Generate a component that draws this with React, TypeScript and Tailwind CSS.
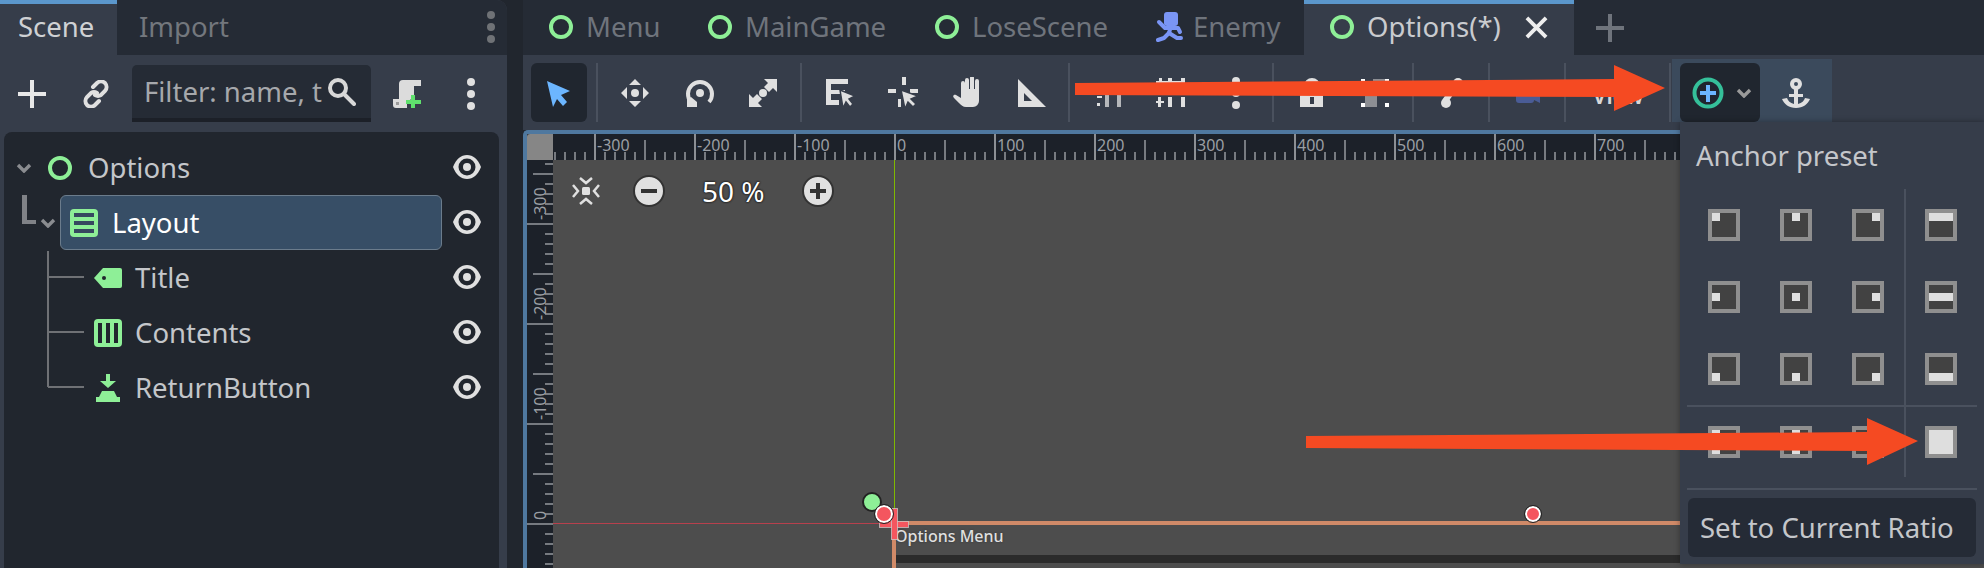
import React from 'react';

const FONT = { fontFamily: '"Noto Sans", sans-serif' };

const Ring = () => (
  <svg width="24" height="24" viewBox="0 0 24 24" className="shrink-0">
    <circle cx="12" cy="12" r="10" fill="none" stroke="#8eef97" strokeWidth="4" />
  </svg>
);

const Eye = () => (
  <svg width="28" height="24" viewBox="0 0 28 24" className="shrink-0">
    <path d="M0 12C3 4 8 0 14 0s11 4 14 12c-3 8-8 12-14 12S3 20 0 12z" fill="#e0e0e0" />
    <circle cx="14" cy="12" r="8.5" fill="#21262e" />
    <circle cx="14" cy="12" r="4" fill="#e0e0e0" />
  </svg>
);

const Chevron = ({ color = '#8a8c90' }: { color?: string }) => (
  <svg width="16" height="10" viewBox="0 0 16 10" className="shrink-0">
    <path d="M2 2l6 6 6-6" fill="none" stroke={color} strokeWidth="3.4" />
  </svg>
);

const LayoutIcon = () => (
  <svg width="28" height="28" viewBox="0 0 28 28" className="shrink-0">
    <rect width="28" height="28" rx="4" fill="#8eef97" />
    <rect x="4" y="4" width="20" height="4" fill="#36485f" />
    <rect x="4" y="12" width="20" height="4" fill="#36485f" />
    <rect x="4" y="20" width="20" height="4" fill="#36485f" />
  </svg>
);

const TagIcon = () => (
  <svg width="28" height="28" viewBox="0 0 28 28" className="shrink-0">
    <path d="M9 4h17a2 2 0 012 2v16a2 2 0 01-2 2H9l-9-10z" fill="#8eef97" />
    <circle cx="10" cy="14" r="2" fill="#21262e" />
  </svg>
);

const ColumnsIcon = () => (
  <svg width="28" height="28" viewBox="0 0 28 28" className="shrink-0">
    <rect width="28" height="28" rx="4" fill="#8eef97" />
    <rect x="4" y="4" width="4" height="20" fill="#21262e" />
    <rect x="12" y="4" width="4" height="20" fill="#21262e" />
    <rect x="20" y="4" width="4" height="20" fill="#21262e" />
  </svg>
);

const ReturnIcon = () => (
  <svg width="28" height="28" viewBox="0 0 28 28" className="shrink-0">
    <path d="M12 0h4v7h6l-8 7-8-7h6z" fill="#8eef97" />
    <path d="M8 17h12l3 6H5z" fill="#8eef97" />
    <rect x="2" y="23" width="24" height="5" fill="#8eef97" />
  </svg>
);

const TreeRow = ({ indent, icon, label, chevron, chevronGap = 4, gap = 13, selected }: {
  indent: number; icon: React.ReactNode; label: string; chevron?: boolean; chevronGap?: number; gap?: number; selected?: boolean;
}) => (
  <div className="h-[55px] flex items-center relative">
    <div className="flex items-center h-full" style={{ marginLeft: indent }}>
      {chevron && <div className="w-[16px]" style={{ marginRight: chevronGap }}><Chevron /></div>}
      {selected ? (
        <div className="w-[382px] h-[55px] flex items-center pl-[9px] gap-[14px] bg-[#374e66] border border-[#6b7c8c] rounded-[6px] text-white">
          {icon}<span>{label}</span>
        </div>
      ) : (
        <div className="flex items-center text-[#c4c6ca]" style={{ gap }}>{icon}<span>{label}</span></div>
      )}
    </div>
    <div className="absolute left-[449px] top-[15px]"><Eye /></div>
  </div>
);

const SceneDock = () => (
  <div className="w-[507px] shrink-0 flex flex-col bg-[#363d4a] rounded-tr-[10px] overflow-hidden">
    <div className="h-[55px] flex bg-[#252b35] relative">
      <div className="w-[117px] border-t-4 border-[#5b97cc] bg-[#363d4a] text-[#cfd1d4] pl-[18px] pb-[5px] flex items-center">Scene</div>
      <div className="pl-[22px] pb-[1px] flex items-center text-[#73777d]">Import</div>
      <svg width="8" height="32" viewBox="0 0 8 32" className="absolute right-[12px] top-[11px]">
        <circle cx="4" cy="4" r="4" fill="#6f7276" /><circle cx="4" cy="16" r="4" fill="#6f7276" /><circle cx="4" cy="28" r="4" fill="#6f7276" />
      </svg>
    </div>
    <div className="h-[77px] flex items-center shrink-0">
      <svg width="28" height="28" viewBox="0 0 28 28" className="ml-[18px]">
        <path d="M12 0h4v12h12v4H16v12h-4V16H0v-4h12z" fill="#e8e8e8" />
      </svg>
      <svg width="28" height="28" viewBox="0 0 28 28" className="ml-[36px]">
        <g fill="none" stroke="#e0e0e0" strokeWidth="4" strokeLinecap="round">
          <path d="M11 7l4-4a6 6 0 018 0 6 6 0 010 8l-4 4a6 6 0 01-6 0" />
          <path d="M17 21l-4 4a6 6 0 01-8 0 6 6 0 010-8l4-4a6 6 0 016 0" />
        </g>
      </svg>
      <div className="ml-[22px] w-[239px] h-[57px] bg-[#252b35] border-b-4 border-[#1c2028] rounded-t-[5px] flex items-center pl-[12px] relative text-[#a6a8ac] overflow-hidden">
        <span className="whitespace-nowrap">Filter: name, t</span>
        <svg width="28" height="28" viewBox="0 0 28 28" className="absolute left-[196px] top-[13px]">
          <circle cx="10" cy="10" r="8" fill="#252b35" stroke="#d8d8d8" strokeWidth="4" />
          <path d="M16 16l10 10" stroke="#d8d8d8" strokeWidth="4" strokeLinecap="round" />
        </svg>
      </div>
      <svg width="28" height="28" viewBox="0 0 28 28" className="ml-[22px]">
        <path d="M10 0h18v6h-7v10l-3 3-4 5v4H3a3 3 0 01-3-3v-6h6V4a4 4 0 014-4z" fill="#dcdcdc" />
        <path d="M3 22h3v3H3z" fill="#9a9a9a" />
        <path d="M18 15h4v5h6v4h-6v4h-4v-4h-5v-4h5z" fill="#5fe06d" />
      </svg>
      <svg width="8" height="32" viewBox="0 0 8 32" className="ml-[46px]">
        <circle cx="4" cy="4" r="4" fill="#e0e0e0" /><circle cx="4" cy="16" r="4" fill="#e0e0e0" /><circle cx="4" cy="28" r="4" fill="#e0e0e0" />
      </svg>
    </div>
    <div className="flex-1 ml-[4px] mr-[8px] bg-[#21262e] rounded-t-[8px] pt-[8px] relative">
      {/* relationship lines */}
      <svg width="100" height="300" viewBox="0 0 100 300" className="absolute left-0 top-0">
        <path d="M18 63h5v25h9v4H18z" fill="#808287" />
        <path d="M44 119v136M44 145h36M44 200h36M44 255h36" fill="none" stroke="#6f7175" strokeWidth="2" />
      </svg>
      <TreeRow indent={12} icon={<Ring />} label="Options" chevron chevronGap={16} gap={16} />
      <TreeRow indent={36} icon={<LayoutIcon />} label="Layout" chevron selected />
      <TreeRow indent={90} icon={<TagIcon />} label="Title" />
      <TreeRow indent={90} icon={<ColumnsIcon />} label="Contents" />
      <TreeRow indent={90} icon={<ReturnIcon />} label="ReturnButton" />
    </div>
  </div>
);

const EnemyIcon = () => (
  <svg width="28" height="30" viewBox="0 0 28 30" className="shrink-0">
    <rect x="8" y="0" width="14" height="14" rx="3" fill="#7a95f5" />
    <g fill="none" stroke="#7a95f5" strokeWidth="4" strokeLinejoin="round" strokeLinecap="round">
      <path d="M3 10l6 6h13l2 4" />
      <path d="M15 14l-2 7" />
      <path d="M13 21l-5 5-6 2" />
      <path d="M13 21l8 5h4" />
    </g>
  </svg>
);

const DocTab = ({ label, icon, w, pl, gap = 13 }: { label: string; icon: React.ReactNode; w: number; pl: number; gap?: number }) => (
  <div className="flex items-center pb-[1px] text-[#6f747c]" style={{ width: w, paddingLeft: pl, gap }}>
    {icon}<span>{label}</span>
  </div>
);

const Sep = ({ ml = 4, mr = 6 }: { ml?: number; mr?: number }) => (
  <div className="w-[2px] h-[59px] bg-[#4a515e] shrink-0" style={{ marginLeft: ml, marginRight: mr }} />
);

const Tool = ({ children, w = 64 }: { children: React.ReactNode; w?: number }) => (
  <div className="h-[59px] flex items-center justify-center shrink-0" style={{ width: w }}>{children}</div>
);

const I = ({ children }: { children: React.ReactNode }) => (
  <svg width="32" height="32" viewBox="0 0 32 32">{children}</svg>
);

const W = '#e0e0e0';

const Toolbar = () => (
  <div className="h-[75px] flex items-start pt-[8px] bg-[#363d4a] shrink-0 pl-[8px]">
    <div className="w-[56px] h-[59px] rounded-[6px] bg-[#20262f] flex items-center justify-center shrink-0">
      <I><path d="M4 4l23 10-9 4 6 7-4 4-6-7-4 8z" fill="#6cb6ff" /></I>
    </div>
    <Sep ml={9} mr={5} />
    <Tool>
      <I>
        <circle cx="16" cy="16" r="4" fill={W} />
        <path d="M16 2l6 6H10zM16 30l-6-6h12zM2 16l6-6v12zM30 16l-6 6V10z" fill={W} />
      </I>
    </Tool>
    <Tool>
      <I>
        <circle cx="17" cy="16" r="4" fill={W} />
        <path d="M8 25a12 12 0 1118 0" fill="none" stroke={W} strokeWidth="4" />
        <path d="M4 30v-8l4-2 6 5v5z" fill={W} />
      </I>
    </Tool>
    <Tool>
      <I>
        <circle cx="16" cy="16" r="4" fill={W} />
        <g transform="translate(2 2)">
          <path d="M15 0H28V13L24 9 20 13 15 8 19 4zM13 28H0V15L4 19 8 15 13 20 9 24z" fill={W} />
        </g>
      </I>
    </Tool>
    <Sep ml={5} />
    <Tool>
      <I>
        <path d="M2 2h22v5H7v6h14v4H7v6h8v5H2z" fill={W} />
        <path d="M16 13l15 6-6 3 4 5-3 3-4-5-3 6z" fill={W} stroke="#363d4a" strokeWidth="1.5" />
      </I>
    </Tool>
    <Tool>
      <I>
        <path d="M14 0h4v8h-4zM0 12h8v4H0zM22 12h8v4h-8zM10 22h3v8h-3z" fill={W} />
        <path d="M13 13l17 6-7 3 5 5-3 3-5-5-3 7z" fill={W} stroke="#363d4a" strokeWidth="1.5" />
      </I>
    </Tool>
    <Tool>
      <I>
        <path d="M13 3a2 2 0 014 0v9h1V1a2 2 0 014 0v11h1V4a2 2 0 014 0v20a6 6 0 01-6 6h-7c-3 0-5-2-7-4l-5-5c-2-2 0-4 2-3l5 3V6a2 2 0 014 0z" fill={W} />
      </I>
    </Tool>
    <Tool>
      <I>
        <path fillRule="evenodd" d="M2 2l28 28H2zM8 16v8h8z" fill={W} />
      </I>
    </Tool>
    <Sep />
    {/* these sit mostly under the arrow, only their ends show */}
    <Tool>
      <I>
        <path d="M13 6h4v24h-4zM25 6h4v24h-4z" fill={W} opacity=".75" />
        <path d="M5 19h5v2H5zM5 26h3v3H5z" fill={W} />
      </I>
    </Tool>
    <Tool>
      <I>
        <path d="M-1 4h30v3H-1zM3 1h3v12H3zM12 1h4v12h-4zM25 1h4v12h-4zM2 20h3v10H2zM-1 24h9v2H-1zM12 20h4v10h-4zM25 20h4v10h-4z" fill={W} />
      </I>
    </Tool>
    <Tool>
      <I>
        <circle cx="16" cy="4" r="4" fill={W} /><circle cx="16" cy="16" r="4" fill={W} /><circle cx="16" cy="28" r="4" fill={W} />
      </I>
    </Tool>
    <Sep />
    <Tool>
      <I>
        <path d="M8 14V9a8 8 0 0116 0v5h3v16H4V14zM12 14h8V9a4 4 0 00-8 0z" fill={W} fillRule="evenodd" />
        <rect x="14" y="20" width="4" height="7" fill="#363d4a" />
      </I>
    </Tool>
    <Tool>
      <I>
        <path d="M13 2h12v11H13zM5 14h12v16H5z" fill="#8d8f94" />
        <path d="M1 2h4v4H1zM25 2h4v4h-4zM1 26h4v4H1zM25 26h4v4h-4z" fill="#fff" />
      </I>
    </Tool>
    <Sep />
    <Tool>
      <I>
        <circle cx="10" cy="26" r="5" fill={W} />
        <circle cx="22" cy="6" r="5" fill={W} />
        <path d="M9 24l13-18" stroke={W} strokeWidth="6" />
      </I>
    </Tool>
    <Sep />
    <Tool>
      <I>
        <rect x="4" y="6" width="18" height="20" rx="3" fill="#4a5c96" />
        <path d="M22 16l6-4v14l-6-3z" fill="#4a5c96" />
      </I>
    </Tool>
    <Sep />
    <Tool w={92}><span className="text-[22px] font-semibold text-[#d8d8d8] pt-[6px]">View</span></Tool>
    <Sep ml={5} mr={1} />
    <div className="w-[160px] h-[63px] -mt-[4px] pt-[4px] pl-[8px] bg-[#3b4a5c] flex items-start shrink-0">
      <div className="w-[80px] h-[59px] rounded-[6px] bg-[#20262f] flex items-center pl-[12px] gap-[12px] shrink-0">
        <svg width="32" height="32" viewBox="0 0 32 32" className="shrink-0">
          <circle cx="16" cy="16" r="13.5" fill="none" stroke="#35c09a" strokeWidth="4" />
          <path d="M14 8h4v6h6v4h-6v7h-4v-7H8v-4h6z" fill="#6cb6ff" />
        </svg>
        <Chevron color="#9a9a9a" />
      </div>
      <div className="w-[72px] h-[59px] flex items-center justify-center">
        <svg width="28" height="30" viewBox="0 0 28 30">
          <circle cx="14" cy="6" r="4" fill="none" stroke={W} strokeWidth="4" />
          <path d="M12 10h4v6h5v3h-5v7c4-1 6-3 7-6l5 1c-2 5-7 9-14 9S2 26 0 21l5-1c1 3 3 5 7 6v-7H7v-3h5z" fill={W} />
        </svg>
      </div>
    </div>
  </div>
);

const RULER_X = [-300, -200, -100, 0, 100, 200, 300, 400, 500, 600, 700];
const RULER_Y = [-300, -200, -100, 0];

const TopRuler = () => {
  const ticks = [];
  for (let x = 1; x <= 1127; x += 10) {
    const n = (((x - 41) % 100) + 100) % 100;
    const major = n === 0;
    const mid = n === 50;
    ticks.push(<rect key={x} x={x} y={major ? 0 : mid ? 6 : 18} width="2" height={major ? 26 : mid ? 20 : 8} fill={major ? '#8b8f94' : '#767a80'} />);
  }
  return (
    <div className="flex-1 h-[26px] bg-[#1c2129] relative overflow-hidden">
      <svg width="1131" height="26" className="absolute left-0 top-0">{ticks}</svg>
      {RULER_X.map((v) => (
        <span key={v} className="absolute top-[-1px] text-[16px] leading-[24px] text-[#9a9ea3]" style={{ left: 44 + (v + 300) }}>{v}</span>
      ))}
    </div>
  );
};

const SideRuler = () => {
  const ticks = [];
  for (let y = 3; y <= 410; y += 10) {
    const major = (y - 3) % 100 === 60;
    const mid = (y - 3) % 100 === 10;
    ticks.push(<rect key={y} x={major ? 0 : mid ? 6 : 18} y={y} width={major ? 26 : mid ? 20 : 8} height="2" fill="#767a80" />);
  }
  return (
    <div className="w-[26px] shrink-0 bg-[#1c2129] relative overflow-hidden">
      <svg width="26" height="410" className="absolute left-0 top-0">{ticks}</svg>
      {RULER_Y.map((v) => (
        <span
          key={v}
          className="absolute left-[5px] text-[16px] leading-[16px] text-[#9a9ea3] origin-top-left -rotate-90 whitespace-nowrap"
          style={{ top: 60 + (v + 300) }}
        >{v}</span>
      ))}
    </div>
  );
};

const Viewport = () => (
  <div className="flex-1 bg-[#4d4d4d] relative overflow-hidden">
    {/* zoom widget */}
    <div className="absolute left-[19px] top-[15px] flex items-center h-[32px]">
      <svg width="28" height="28" viewBox="0 0 28 28" className="shrink-0">
        <rect x="10" y="10" width="8" height="8" rx="1.5" fill={W} />
        <path d="M8 1l6 5 6-5M8 27l6-5 6 5M1 8l5 6-5 6M27 8l-5 6 5 6" fill="none" stroke={W} strokeWidth="2.5" />
      </svg>
      <svg width="32" height="32" viewBox="0 0 32 32" className="ml-[33px] shrink-0">
        <circle cx="16" cy="16" r="15" fill="#e0e0e0" stroke="#333" strokeWidth="2" />
        <rect x="8" y="14" width="16" height="4" fill="#333" />
      </svg>
      <span className="ml-[37px] w-[100px] text-white text-[28px] [text-shadow:0_0_2px_#111,0_0_2px_#111] whitespace-nowrap">50 %</span>
      <svg width="32" height="32" viewBox="0 0 32 32" className="shrink-0">
        <circle cx="16" cy="16" r="15" fill="#e0e0e0" stroke="#333" strokeWidth="2" />
        <path d="M14 8h4v6h6v4h-6v6h-4v-6H8v-4h6z" fill="#333" />
      </svg>
    </div>
    {/* axes and the Control rect */}
    <div className="absolute left-[341px] top-0 w-[1px] h-[365px] bg-[#7fb800]" />
    <div className="absolute left-0 top-[363px] w-[340px] h-[1px] bg-[#b7404d]" />
    <div className="absolute left-[339px] top-[361px] right-0 h-[4px] bg-[#d08a68]" />
    <div className="absolute left-[339px] top-[365px] bottom-0 w-[4px] bg-[#d08a68]" />
    <span className="absolute left-[342px] top-[364px] text-[16px] leading-[24px] font-medium text-[#e0e0e0] [text-shadow:0_0_2px_#333]">Options Menu</span>
    <div className="absolute left-[343px] top-[395px] right-0 h-[8px] bg-[#2b2b2b]" />
    {/* handles */}
    <svg width="60" height="60" viewBox="0 0 60 60" className="absolute left-[307px] top-[331px]">
      <rect x="19.5" y="29.5" width="14" height="7" fill="#f4565f" stroke="#cfcfcf" strokeOpacity=".7" />
      <rect x="33.5" y="30.5" width="15" height="6" fill="#f4565f" stroke="#cfcfcf" strokeOpacity=".7" />
      <rect x="31.5" y="17.5" width="6" height="31" fill="#f4565f" stroke="#cfcfcf" strokeOpacity=".7" />
      <circle cx="12" cy="11" r="9" fill="#8eef97" stroke="#222" strokeWidth="2" />
      <circle cx="24" cy="23" r="8" fill="#f4565f" stroke="#fff" strokeWidth="2" />
      <circle cx="24" cy="23" r="9.5" fill="none" stroke="#222" strokeWidth="1" />
    </svg>
    <svg width="20" height="20" viewBox="0 0 20 20" className="absolute left-[970px] top-[344px]">
      <circle cx="10" cy="10" r="7" fill="#f4565f" stroke="#fff" strokeWidth="2" />
      <circle cx="10" cy="10" r="8.5" fill="none" stroke="#222" strokeWidth="1" />
    </svg>
  </div>
);

const PresetIcon = ({ x, y, w, h }: { x: number; y: number; w: number; h: number }) => (
  <svg width="32" height="32" viewBox="0 0 32 32" className="shrink-0">
    <rect width="32" height="32" fill="#8f8f8f" />
    <rect x="4" y="4" width="24" height="24" fill="#424242" />
    <rect x={x} y={y} width={w} height={h} fill="#dedede" />
  </svg>
);

const Cell = ({ children, w = 72 }: { children: React.ReactNode; w?: number }) => (
  <div className="h-full flex items-center justify-center" style={{ width: w }}>{children}</div>
);

const PresetRow = ({ icons, h }: { icons: number[][]; h: number }) => (
  <div className="flex ml-[8px]" style={{ height: h }}>
    {icons.slice(0, 3).map(([x, y, w, ih], i) => (
      <Cell key={i}><PresetIcon x={x} y={y} w={w} h={ih} /></Cell>
    ))}
    <div className="w-[2px] bg-[#4a515e]" />
    <Cell w={70}><PresetIcon x={icons[3][0]} y={icons[3][1]} w={icons[3][2]} h={icons[3][3]} /></Cell>
  </div>
);

const AnchorPopup = () => (
  <div className="absolute left-[1680px] top-[122px] w-[304px] h-[442px] bg-[#363d4a] shadow-[0_0_6px_rgba(0,0,0,0.35)]">
    <div className="h-[67px] flex items-center pl-[16px] text-[#c4c6ca]">Anchor preset</div>
    <PresetRow h={72} icons={[[4, 4, 8, 8], [12, 4, 8, 8], [20, 4, 8, 8], [4, 4, 24, 8]]} />
    <PresetRow h={72} icons={[[4, 12, 8, 8], [12, 12, 8, 8], [20, 12, 8, 8], [4, 12, 24, 8]]} />
    <PresetRow h={72} icons={[[4, 20, 8, 8], [12, 20, 8, 8], [20, 20, 8, 8], [4, 20, 24, 8]]} />
    <div className="h-[2px] mx-[7px] bg-[#4a515e]" />
    <PresetRow h={70} icons={[[4, 4, 8, 24], [12, 4, 8, 24], [20, 4, 8, 24], [4, 4, 24, 24]]} />
    <div className="h-[2px] mx-[7px] mt-[11px] bg-[#4a515e]" />
    <div className="h-[59px] mx-[8px] mt-[8px] rounded-[6px] bg-[#252b36] flex items-center pl-[12px] text-[#c4c6ca]">Set to Current Ratio</div>
  </div>
);

const Arrows = () => (
  <svg width="1984" height="568" viewBox="0 0 1984 568" className="absolute left-0 top-0 pointer-events-none">
    <polygon points="1075,83 1614,79 1614,65 1665,88 1614,111 1614,97 1075,95" fill="#f54a22" />
    <polygon points="1306,436 1867,432 1867,418 1918,441 1867,465 1867,451 1306,448" fill="#f54a22" />
  </svg>
);

export default function App() {
  return (
    <div className="w-[1984px] h-[568px] relative flex overflow-hidden bg-[#21262e] text-[27.5px]" style={FONT}>
      <SceneDock />
      <div className="w-[16px] shrink-0" />
      <div className="flex-1 flex flex-col min-w-0">
        <div className="h-[55px] flex items-stretch bg-[#252b35] shrink-0">
          <DocTab label="Menu" icon={<Ring />} w={159} pl={26} />
          <DocTab label="MainGame" icon={<Ring />} w={227} pl={26} />
          <DocTab label="LoseScene" icon={<Ring />} w={222} pl={26} />
          <DocTab label="Enemy" icon={<EnemyIcon />} w={173} pl={25} gap={9} />
          <div className="w-[270px] border-t-4 border-[#5b97cc] bg-[#363d4a] flex items-center pl-[26px] pb-[5px] gap-[13px] text-[#c9cbcf] relative">
            <Ring /><span>Options(*)</span>
            <svg width="23" height="23" viewBox="0 0 24 24" className="absolute left-[221px] top-[12px]">
              <path d="M2 2l20 20M22 2L2 22" stroke="#eeeeee" strokeWidth="4" />
            </svg>
          </div>
          <div className="flex items-center pl-[22px]">
            <svg width="28" height="28" viewBox="0 0 28 28">
              <path d="M12 0h4v12h12v4H16v12h-4V16H0v-4h12z" fill="#6f747c" />
            </svg>
          </div>
        </div>
        <Toolbar />
        <div className="flex-1 flex flex-col border-l-4 border-t-4 border-[#4f789f] rounded-tl-[5px] min-h-0">
          <div className="flex h-[26px] shrink-0">
            <div className="w-[26px] h-[26px] bg-[#868686] rounded-tl-[3px] shrink-0" />
            <TopRuler />
          </div>
          <div className="flex-1 flex min-h-0">
            <SideRuler />
            <Viewport />
          </div>
        </div>
      </div>
      <AnchorPopup />
      <Arrows />
    </div>
  );
}
